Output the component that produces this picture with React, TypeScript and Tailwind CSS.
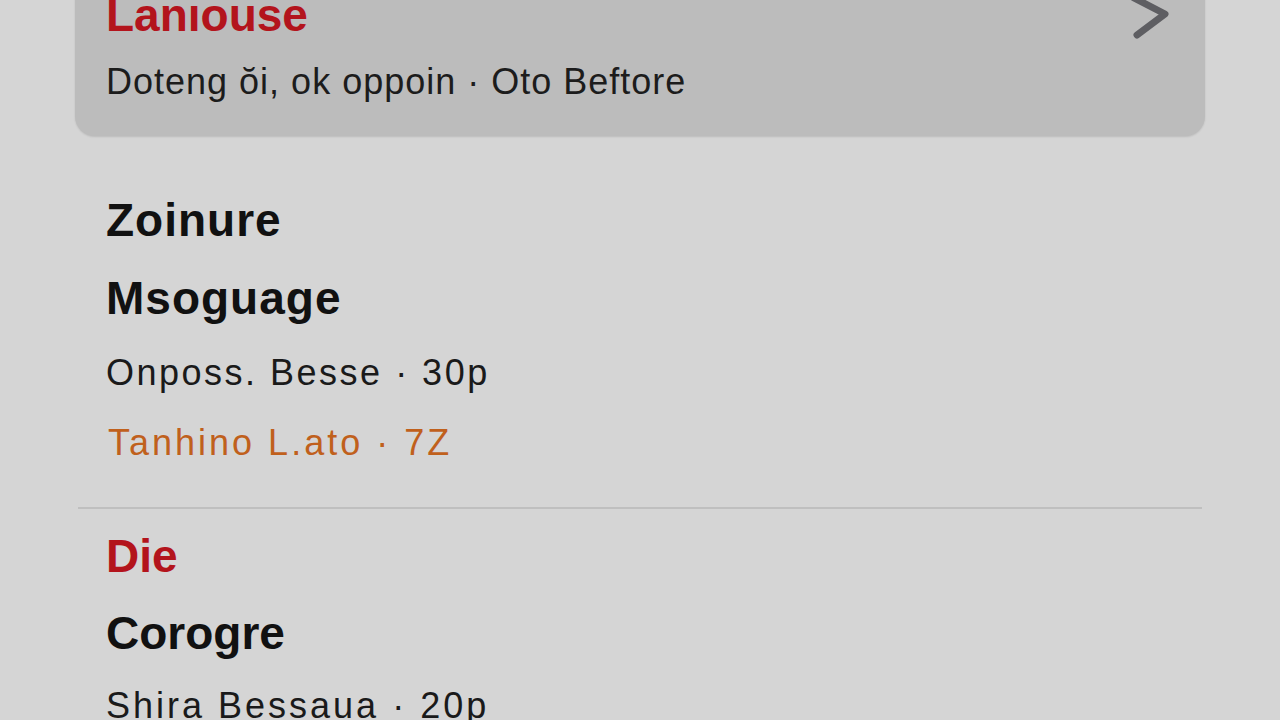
import React from 'react';

const FONT = { fontFamily: '"Liberation Sans", Arial, sans-serif' };

function Chevron() {
  return (
    <svg width="48" height="54" viewBox="0 0 48 54" fill="none">
      <path d="M8 8 L39 24 L11 45" stroke="#5e5e62" strokeWidth="7" strokeLinecap="round" strokeLinejoin="round" />
    </svg>
  );
}

export default function App() {
  return (
    <div style={FONT} className="w-full h-[720px] overflow-hidden bg-[#d5d5d5]">
      {/* Top card (scrolled partially out of view) */}
      <div className="relative mx-[75px] mt-[-28px] pt-[20px] pb-[26px] px-[31px] bg-[#bcbcbc] rounded-[20px] shadow-[0_1px_2px_rgba(0,0,0,0.12)]">
        <div className="text-[46px] leading-[46px] font-bold text-[#b3141c]">Lanıouse</div>
        <div className="mt-[16px] text-[36px] leading-[56px] tracking-[1px] text-[#1c1c1c]">
          Doteng ŏi, ok oppoin · Oto Beftore
        </div>
        <div className="absolute right-[31px] top-[18px]">
          <Chevron />
        </div>
      </div>

      {/* Section one */}
      <div className="px-[106px] pt-[45px]">
        <div className="text-[46px] leading-[78px] font-bold tracking-[1px] text-[#111111]">Zoinure</div>
        <div className="text-[46px] leading-[78px] font-bold tracking-[1px] text-[#111111]">Msoguage</div>
        <div className="text-[36px] leading-[72px] tracking-[2.5px] text-[#1a1a1a]">Onposs. Besse · 30p</div>
        <div className="pl-[2px] text-[36px] leading-[68px] tracking-[3px] text-[#c0601c]">Tanhino L.ato · 7Z</div>
      </div>

      <div className="mx-[78px] mt-[30px] h-[2px] bg-[#bfbfbf]" />

      {/* Section two */}
      <div className="px-[106px]">
        <div className="text-[46px] leading-[94px] font-bold text-[#b3141c]">Die</div>
        <div className="text-[46px] leading-[60px] font-bold text-[#111111]">Corogre</div>
        <div className="text-[36px] leading-[86px] tracking-[3px] text-[#1a1a1a]">Shira Bessaua · 20p</div>
      </div>
    </div>
  );
}
